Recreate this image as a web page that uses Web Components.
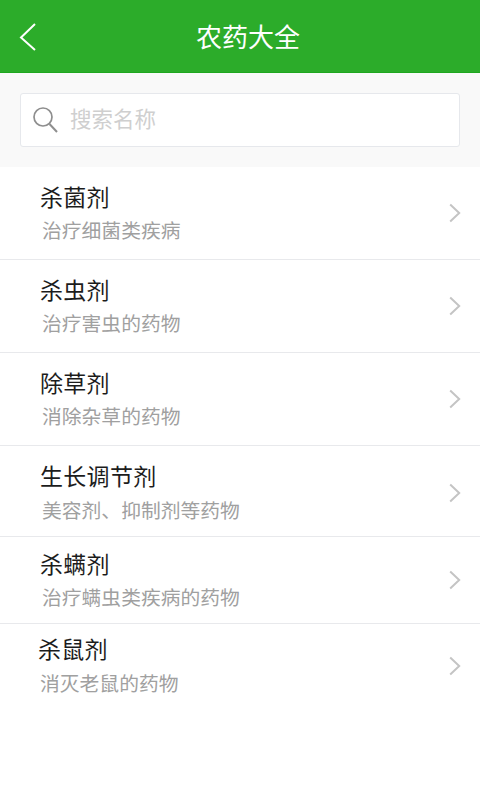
<!DOCTYPE html>
<html lang="zh-CN"><head><meta charset="utf-8"><style>
html,body{margin:0;padding:0;background:#fff;}
body{width:480px;height:800px;overflow:hidden;font-family:"Noto Sans CJK SC","Liberation Sans",sans-serif;}
</style></head><body>
<app-header>农药大全</app-header>
<search-box placeholder="搜索名称"></search-box>
<pest-list>
<pest-row h="93" top="12" gap="2" title="杀菌剂" sub="治疗细菌类疾病"></pest-row>
<pest-row h="93" top="12" gap="2" title="杀虫剂" sub="治疗害虫的药物"></pest-row>
<pest-row h="93" top="12" gap="2" title="除草剂" sub="消除杂草的药物"></pest-row>
<pest-row h="91" top="12" gap="3" shift="4" title="生长调节剂" sub="美容剂、抑制剂等药物"></pest-row>
<pest-row h="87" top="9" gap="2" title="杀螨剂" sub="治疗螨虫类疾病的药物"></pest-row>
<pest-row h="87" top="7" gap="3" shift="-4" left="38" last title="杀鼠剂" sub="消灭老鼠的药物"></pest-row>
</pest-list>
<script>
customElements.define('app-header',class extends HTMLElement{constructor(){super();this.attachShadow({mode:'open'}).innerHTML=`<style>
:host{display:flex;box-sizing:content-box;align-items:center;justify-content:center;position:relative;height:72px;padding-left:16px;width:464px;background:#2cac2a;border-bottom:1px solid #1fa71f;color:#fff;font-size:26px;line-height:72px;}
svg{position:absolute;left:19px;top:23px;}
</style><svg width="18" height="28" viewBox="0 0 18 28" fill="none" stroke="#fff" stroke-width="2"><path d="M16 1 2 14.5 16 27"/></svg><slot></slot>`}});
customElements.define('search-box',class extends HTMLElement{constructor(){super();this.attachShadow({mode:'open'}).innerHTML=`<style>
:host{display:block;background:#f9f9f9;padding:20px;height:54px;}
.b{box-sizing:border-box;height:54px;background:#fff;border:1px solid #e6e8ec;border-radius:3px;display:flex;align-items:center;padding-left:12px;gap:11px;}
svg{flex:none;}
span{font-size:21.5px;line-height:30px;color:#cfcfcf;position:relative;top:-2px;}
</style><div class="b"><svg width="26" height="26" viewBox="0 0 26 26" fill="none" stroke="#8e8e8e"><circle cx="10" cy="10" r="9" stroke-width="1.7"/><path d="M16.5 17 24 25" stroke-width="2"/></svg><span>${this.getAttribute('placeholder')}</span></div>`}});
customElements.define('pest-list',class extends HTMLElement{constructor(){super();this.attachShadow({mode:'open'}).innerHTML=`<style>:host{display:block;}</style><slot></slot>`}});
customElements.define('pest-row',class extends HTMLElement{connectedCallback(){if(this.shadowRoot)return;const g=a=>this.getAttribute(a);
const h=g('h'),top=g('top'),left=g('left')||40,gap=g('gap'),shift=g('shift')||0;
this.attachShadow({mode:'open'}).innerHTML=`<style>
:host{display:flex;box-sizing:border-box;height:${h}px;align-items:center;justify-content:space-between;padding:0 19px 0 ${left}px;border-bottom:${this.hasAttribute('last')?'0':'1px solid #e8e9ec'};background:#fff;}
.c{align-self:flex-start;padding-top:${top}px;}
.t{font-size:23px;line-height:34px;color:#1c1c1c;letter-spacing:.3px;}
.s{font-size:19.8px;line-height:30px;color:#a0a0a0;margin-left:2px;margin-top:${gap}px;}
svg{flex:none;margin-top:${shift}px;}
</style><div class="c"><div class="t">${g('title')}</div><div class="s">${g('sub')}</div></div><svg width="12" height="20" viewBox="0 0 12 20" fill="none" stroke="#c4c4c4" stroke-width="2"><path d="M1.2 1.5 10.2 10 1.2 18.5"/></svg>`}});
</script>
</body></html>
